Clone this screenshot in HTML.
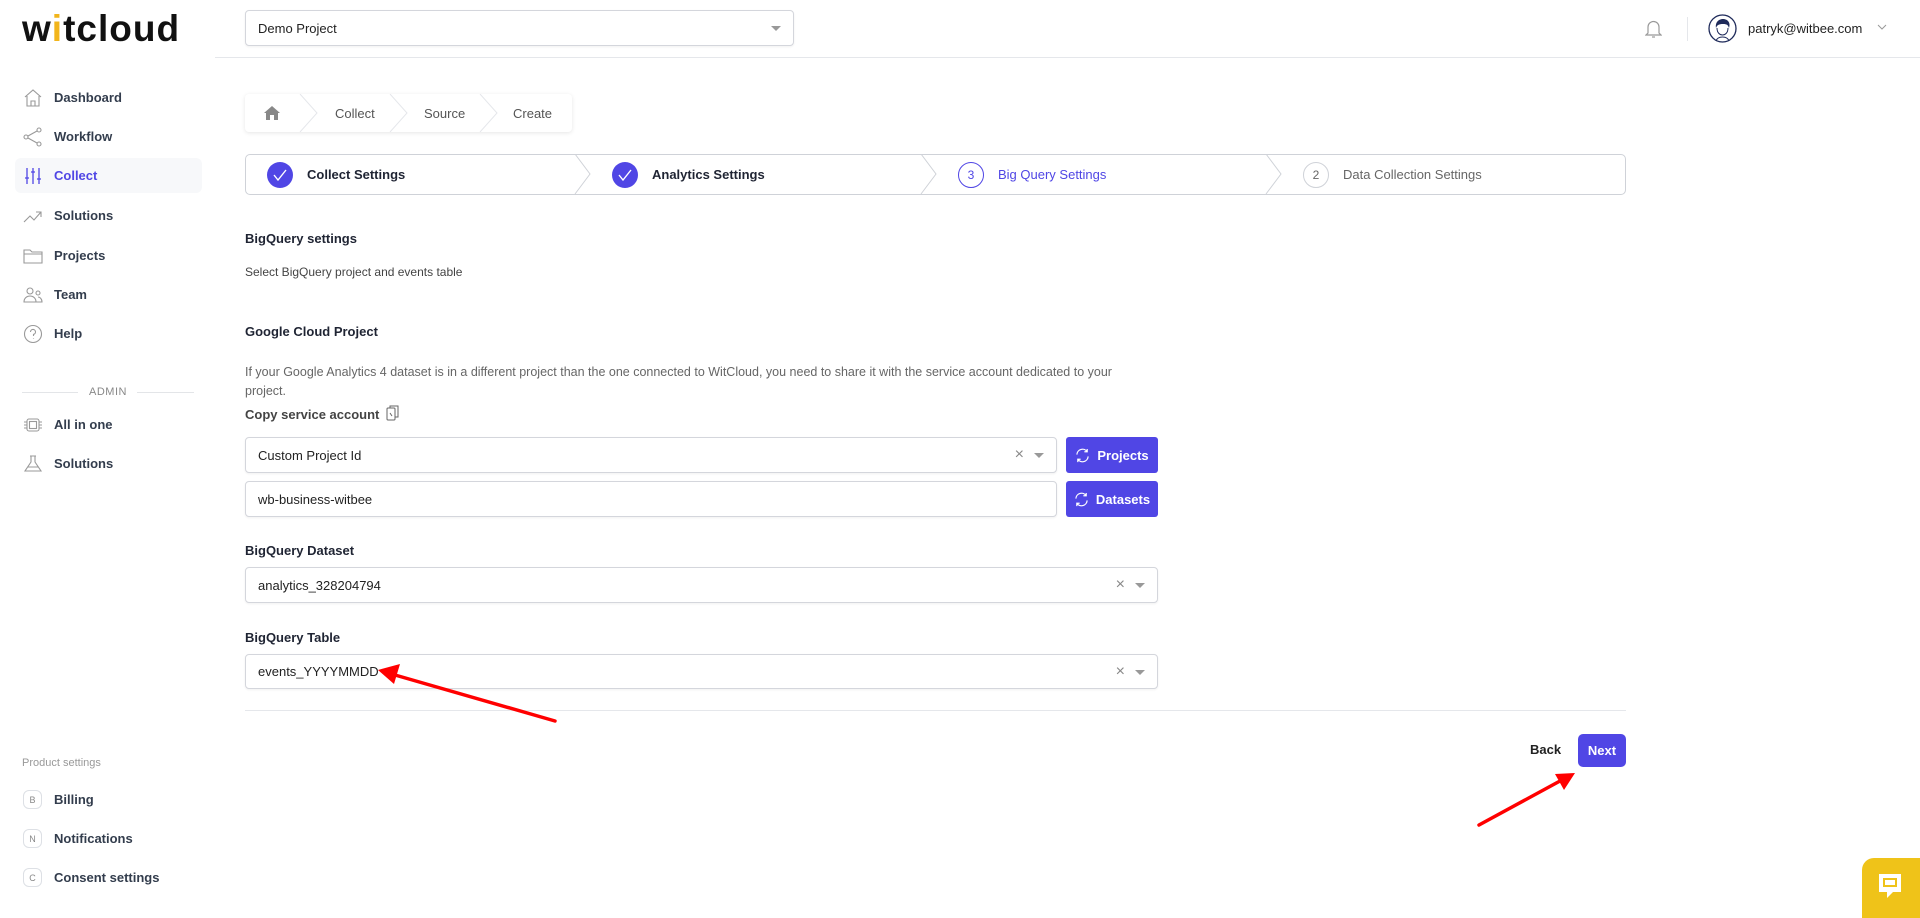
<!DOCTYPE html>
<html><head><meta charset="utf-8"><style>
*{box-sizing:border-box;margin:0;padding:0}
body{width:1920px;height:911px;overflow:hidden;background:#fff;font-family:"Liberation Sans",sans-serif;color:#1f2433;position:relative;font-size:13px}
.abs{position:absolute}
.logo{left:22px;top:8px;font-size:37px;font-weight:bold;letter-spacing:1px;color:#111}
.logo i{color:#f2b51b;font-style:normal}
.hdrline{left:215px;top:57px;width:1705px;height:1px;background:#e5e7eb}
.sel{border:1px solid #d4d6dc;border-radius:4px;background:#fff;box-shadow:0 1px 2px rgba(0,0,0,.06);font-size:13px;color:#222;display:flex;align-items:center;padding-left:12px}
.caret{position:absolute;right:12px;top:50%;margin-top:-2px;border:5px solid transparent;border-top:5px solid #999;border-bottom:0}
.x{position:absolute;right:32px;top:50%;transform:translateY(-50%);color:#888;font-size:16px}
.nav{left:0;width:215px}
.ni{position:absolute;left:15px;width:187px;height:35px;display:flex;align-items:center;font-size:13px;font-weight:bold;color:#333d4d}
.ni svg{position:absolute;left:8px}
.ni span{position:absolute;left:39px}
.ni.act{background:#f7f8fa;border-radius:6px;color:#5046e5}
.badge{position:absolute;left:8px;width:19px;height:19px;border:1px solid #dde0e5;border-radius:6px;font-size:9px;color:#888;display:flex;align-items:center;justify-content:center;font-weight:normal}
.bc{left:245px;top:94px;width:327px;height:38px;border-radius:4px;box-shadow:0 1px 4px rgba(0,0,0,.1);background:#fff;font-size:13px;color:#555}
.step{left:245px;top:154px;width:1381px;height:41px;border:1px solid #cfd2d8;border-radius:5px;font-size:13px}
.circ{position:absolute;width:26px;height:26px;border-radius:50%;top:7px;display:flex;align-items:center;justify-content:center;font-size:12px}
.lbl{font-size:13px;font-weight:bold;color:#1f2433}
.btn{background:#5046e5;color:#fff;border-radius:3px;font-weight:bold;font-size:13px;display:flex;align-items:center;justify-content:center;gap:7px}
</style></head><body>
<div class="abs logo">w<i>i</i>tcloud</div>
<div class="abs hdrline"></div>
<div class="abs sel" style="left:245px;top:10px;width:549px;height:36px">Demo Project<div class="caret"></div></div>
<svg class="abs" style="left:1645px;top:19px" width="17" height="20" viewBox="0 0 17 20" fill="none" stroke="#999" stroke-width="1.2"><path d="M3 14V8a5.5 5.5 0 0 1 11 0v6l2 2H1z"/><path d="M7 18h3"/></svg>
<div class="abs" style="left:1687px;top:17px;width:1px;height:24px;background:#e5e7eb"></div>
<svg class="abs" style="left:1708px;top:14px" width="29" height="29" viewBox="0 0 29 29"><circle cx="14.5" cy="14.5" r="13.5" fill="#fff" stroke="#1e2a5a" stroke-width="1.3"/><path d="M8 14c-1-6 3-9 7-9s8 3 6 9c-1-3-2-4-6-4s-6 1-7 4z" fill="#1e2a5a"/><path d="M9 14c0 5 3 7 5.5 7s5.5-2 5.5-7" fill="none" stroke="#1e2a5a"/><path d="M8 27c1-3 4-4 6.5-4s5.5 1 6.5 4" fill="none" stroke="#1e2a5a"/></svg>
<div class="abs" style="left:1748px;top:21px;font-size:13px;color:#222">patryk@witbee.com</div>
<svg class="abs" style="left:1877px;top:24px" width="10" height="7" viewBox="0 0 10 7" fill="none" stroke="#999"><path d="M1 1l4 4 4-4"/></svg>

<div class="abs nav" style="top:0;height:911px">
<div class="ni" style="top:80px"><svg width="20" height="20" viewBox="0 0 20 20" fill="none" stroke="#999" stroke-width="1.1"><path d="M2 9L10 2l8 7M4 8v10h12V8M8 18v-5h4v5"/></svg><span>Dashboard</span></div>
<div class="ni" style="top:119px"><svg width="20" height="20" viewBox="0 0 20 20" fill="none" stroke="#999" stroke-width="1.1"><circle cx="3" cy="10" r="2"/><circle cx="16" cy="3" r="2"/><circle cx="16" cy="17" r="2"/><path d="M5 9l9-5M5 11l9 5"/></svg><span>Workflow</span></div>
<div class="ni act" style="top:158px"><svg width="20" height="20" viewBox="0 0 20 20" fill="none" stroke="#5046e5" stroke-width="1.3"><path d="M4 2v16M10 2v16M16 2v16M2 12h4M8 6h4M14 13h4"/></svg><span>Collect</span></div>
<div class="ni" style="top:198px"><svg width="20" height="20" viewBox="0 0 20 20" fill="none" stroke="#999" stroke-width="1.1"><path d="M1 16l6-6 4 4 7-8M13 6h5v5"/></svg><span>Solutions</span></div>
<div class="ni" style="top:238px"><svg width="20" height="20" viewBox="0 0 20 20" fill="none" stroke="#999" stroke-width="1.1"><path d="M1 4h6l2 2h10v11H1zM1 8h18"/></svg><span>Projects</span></div>
<div class="ni" style="top:277px"><svg width="20" height="20" viewBox="0 0 20 20" fill="none" stroke="#999" stroke-width="1.1"><circle cx="7" cy="6" r="3"/><circle cx="15" cy="8" r="2"/><path d="M1 17c0-4 3-6 6-6s6 2 6 6zM13 17h6c0-3-2-5-4-5"/></svg><span>Team</span></div>
<div class="ni" style="top:316px"><svg width="20" height="20" viewBox="0 0 20 20" fill="none" stroke="#999" stroke-width="1.1"><circle cx="10" cy="10" r="8.5"/><path d="M7.5 8a2.5 2.5 0 1 1 3 2.4V12M10.5 14.5v.5"/></svg><span>Help</span></div>
<div class="abs" style="left:22px;top:392px;width:56px;height:1px;background:#e3e5e8"></div>
<div class="abs" style="left:89px;top:386px;font-size:11px;color:#888;letter-spacing:.5px">ADMIN</div>
<div class="abs" style="left:137px;top:392px;width:57px;height:1px;background:#e3e5e8"></div>
<div class="ni" style="top:407px"><svg width="20" height="20" viewBox="0 0 20 20" fill="none" stroke="#999" stroke-width="1.1"><rect x="4" y="4" width="12" height="12" rx="2"/><rect x="6.5" y="6.5" width="7" height="7"/><path d="M1 7h3M1 10h3M1 13h3M16 7h3M16 10h3M16 13h3"/></svg><span>All in one</span></div>
<div class="ni" style="top:446px"><svg width="20" height="20" viewBox="0 0 20 20" fill="none" stroke="#999" stroke-width="1.1"><path d="M7 2h6M8 2v6L2 17h16l-6-9V2M5 13h10"/></svg><span>Solutions</span></div>
<div class="abs" style="left:22px;top:757px;font-size:11px;color:#999">Product settings</div>
<div class="ni" style="top:782px"><div class="badge">B</div><span>Billing</span></div>
<div class="ni" style="top:821px"><div class="badge">N</div><span>Notifications</span></div>
<div class="ni" style="top:860px"><div class="badge">C</div><span>Consent settings</span></div>
</div>

<div class="abs bc">
<svg class="abs" style="left:19px;top:12px" width="16" height="14" viewBox="0 0 16 14"><path d="M8 0L0 7h2v7h4V9h4v5h4V7h2z" fill="#888"/></svg>
<svg class="abs" style="left:0;top:0" width="327" height="38" fill="none" stroke="#e5e7eb"><path d="M55 0l17 19-17 19M145 0l17 19-17 19M235 0l17 19-17 19"/></svg>
<div class="abs" style="left:90px;top:12px">Collect</div>
<div class="abs" style="left:179px;top:12px">Source</div>
<div class="abs" style="left:268px;top:12px">Create</div>
</div>

<div class="abs step">
<svg class="abs" style="left:0;top:-1px" width="1381" height="41" fill="none" stroke="#cfd2d8"><path d="M329 0l15 20-15 20M675 0l15 20-15 20M1020 0l15 20-15 20"/></svg>
<div class="circ" style="left:21px;background:#5046e5"><svg width="14" height="12" viewBox="0 0 14 12" fill="none" stroke="#fff" stroke-width="1.4"><path d="M1 6l4 5 8-10"/></svg></div>
<div class="abs lbl" style="left:61px;top:12px">Collect Settings</div>
<div class="circ" style="left:366px;background:#5046e5"><svg width="14" height="12" viewBox="0 0 14 12" fill="none" stroke="#fff" stroke-width="1.4"><path d="M1 6l4 5 8-10"/></svg></div>
<div class="abs lbl" style="left:406px;top:12px">Analytics Settings</div>
<div class="circ" style="left:712px;border:1px solid #5046e5;color:#5046e5">3</div>
<div class="abs" style="left:752px;top:12px;color:#5046e5">Big Query Settings</div>
<div class="circ" style="left:1057px;border:1px solid #cfd2d8;color:#666">2</div>
<div class="abs" style="left:1097px;top:12px;color:#666">Data Collection Settings</div>
</div>

<div class="abs lbl" style="left:245px;top:231px">BigQuery settings</div>
<div class="abs" style="left:245px;top:265px;color:#444;font-size:12px">Select BigQuery project and events table</div>
<div class="abs lbl" style="left:245px;top:324px">Google Cloud Project</div>
<div class="abs" style="left:245px;top:363px;color:#666;font-size:12.5px;width:885px;line-height:19px">If your Google Analytics 4 dataset is in a different project than the one connected to WitCloud, you need to share it with the service account dedicated to your project.</div>
<div class="abs lbl" style="left:245px;top:407px;color:#444">Copy service account</div>
<svg class="abs" style="left:386px;top:405px" width="13" height="17" viewBox="0 0 13 17" fill="none" stroke="#666"><rect x="1" y="3" width="8" height="12" rx="1"/><path d="M4 3V1h8v11h-3M4 8l2 3"/></svg>

<div class="abs sel" style="left:245px;top:437px;width:812px;height:36px">Custom Project Id<div class="x">×</div><div class="caret"></div></div>
<div class="abs btn" style="left:1066px;top:437px;width:92px;height:36px"><svg width="15" height="15" viewBox="0 0 16 16" fill="none" stroke="#fff" stroke-width="1.3"><path d="M2 7a6 6 0 0 1 11-3M14 9a6 6 0 0 1-11 3M13 1v3h-3M3 15v-3h3"/></svg>Projects</div>
<div class="abs sel" style="left:245px;top:481px;width:812px;height:36px">wb-business-witbee</div>
<div class="abs btn" style="left:1066px;top:481px;width:92px;height:36px"><svg width="15" height="15" viewBox="0 0 16 16" fill="none" stroke="#fff" stroke-width="1.3"><path d="M2 7a6 6 0 0 1 11-3M14 9a6 6 0 0 1-11 3M13 1v3h-3M3 15v-3h3"/></svg>Datasets</div>

<div class="abs lbl" style="left:245px;top:543px">BigQuery Dataset</div>
<div class="abs sel" style="left:245px;top:567px;width:913px;height:36px">analytics_328204794<div class="x">×</div><div class="caret"></div></div>
<div class="abs lbl" style="left:245px;top:630px">BigQuery Table</div>
<div class="abs sel" style="left:245px;top:654px;width:913px;height:35px">events_YYYYMMDD<div class="x">×</div><div class="caret"></div></div>
<div class="abs" style="left:245px;top:710px;width:1381px;height:1px;background:#e5e7eb"></div>

<div class="abs" style="left:1530px;top:742px;font-weight:bold;font-size:13px;color:#222">Back</div>
<div class="abs btn" style="left:1578px;top:734px;width:48px;height:33px;border-radius:5px">Next</div>

<svg class="abs" style="left:0;top:0" width="1920" height="911" pointer-events="none">
<path d="M555 721L395 675" stroke="#f00" stroke-width="3.5" stroke-linecap="round"/><path d="M378 670l22-6-6 20z" fill="#f00"/>
<path d="M1479 825L1560 781" stroke="#f00" stroke-width="3.5" stroke-linecap="round"/><path d="M1575 773l-20 1 9 16z" fill="#f00"/>
</svg>

<div class="abs" style="left:1862px;top:858px;width:58px;height:60px;background:#efc319;border-radius:12px 0 0 0"></div>
<svg class="abs" style="left:1876px;top:872px" width="28" height="28" viewBox="0 0 28 28"><path d="M3 2h22v18h-8l-6 6v-6H3z" fill="#fff"/><rect x="8" y="7" width="12" height="7" fill="none" stroke="#efc319" stroke-width="2"/></svg>
</body></html>
